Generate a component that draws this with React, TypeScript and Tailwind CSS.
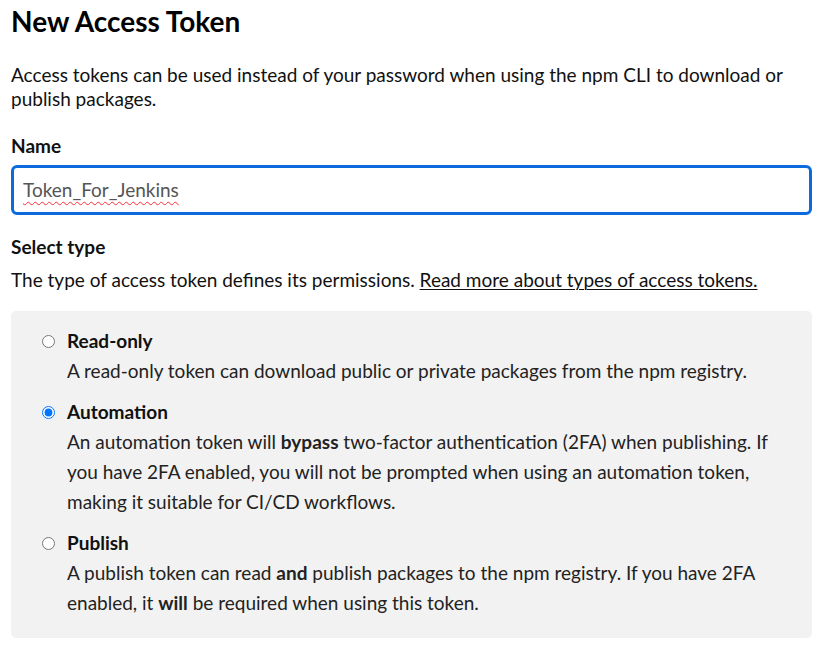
import React from "react";

interface TokenType {
  id: string;
  label: string;
  description: React.ReactNode;
}

const tokenTypes: TokenType[] = [
  {
    id: "readonly",
    label: "Read-only",
    description: (
      <>A read-only token can download public or private packages from the npm registry.</>
    ),
  },
  {
    id: "automation",
    label: "Automation",
    description: (
      <>
        An automation token will <strong className="font-bold">bypass</strong> two-factor
        authentication (2FA) when publishing. If you have 2FA enabled, you will not be prompted
        when using an automation token, making it suitable for CI/CD workflows.
      </>
    ),
  },
  {
    id: "publish",
    label: "Publish",
    description: (
      <>
        A publish token can read <strong className="font-bold">and</strong> publish packages to
        the npm registry. If you have 2FA enabled, it <strong className="font-bold">will</strong>{" "}
        be required when using this token.
      </>
    ),
  },
];

const App: React.FC = () => {
  return (
    <div className="min-h-screen bg-white pl-[11px] pr-[23px] pt-[3px] text-[#111] font-['Lato',sans-serif]">
      <h1 className="text-[28px] leading-[36px] font-bold text-black">New Access Token</h1>

      <p className="mt-[24px] text-[19px] leading-[24px]">
        Access tokens can be used instead of your password when using the npm CLI to download or
        publish packages.
      </p>

      <label className="block mt-[23px] text-[19px] leading-[24px] font-bold">Name</label>
      <div className="mt-[7px] h-[50px] flex items-center border-[3px] border-[#0b6bdc] rounded-[6px] px-[9px] text-[19px] text-[#555]">
        <span className="underline decoration-wavy decoration-red-500 decoration-1 underline-offset-[4px]">
          Token_For_Jenkins
        </span>
      </div>

      <h2 className="mt-[20px] text-[19px] leading-[24px] font-bold">Select type</h2>
      <p className="mt-[9px] text-[19px] leading-[24px]">
        The type of access token defines its permissions.{" "}
        <a href="#" className="underline underline-offset-2 decoration-1">
          Read more about types of access tokens.
        </a>
      </p>

      <div className="mt-[19px] bg-[#f2f2f2] rounded-[5px] pt-[15px] pb-[20px] pl-[31px] pr-[31px] flex flex-col gap-[11px]">
        {tokenTypes.map((t) => (
          <div key={t.id} className="flex items-start gap-[12px]">
            <input
              type="radio"
              name="tokenType"
              readOnly
              checked={t.id === "automation"}
              className="m-0 mt-[9px] w-[13px] h-[13px] shrink-0"
            />
            <div className="text-[19px] leading-[30px]">
              <div className="font-bold">{t.label}</div>
              <div className="text-[#222]">{t.description}</div>
            </div>
          </div>
        ))}
      </div>
    </div>
  );
};

export default App;
